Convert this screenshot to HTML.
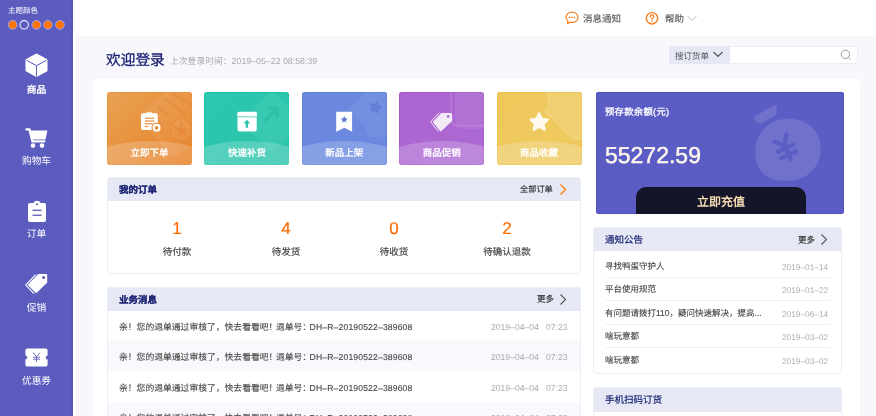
<!DOCTYPE html>
<html lang="zh-CN">
<head>
<meta charset="utf-8">
<style>
*{box-sizing:border-box;margin:0;padding:0}
html,body{width:876px;height:416px;overflow:hidden;background:#fff}
body{position:relative;font-family:"Liberation Sans",sans-serif;color:#333;text-rendering:geometricPrecision}
.a{position:absolute;white-space:nowrap}
#side{left:0;top:0;width:73px;height:416px;background:#5c5cbf;border-right:2px solid #5656b9}
.mi{position:absolute;left:0;width:73px;text-align:center;color:#fff;font-size:9.7px;line-height:12px}
#content{left:75px;top:36px;width:801px;height:380px;background:#f7f7fc}
#panel{left:93px;top:79px;width:767px;height:360px;background:#fff;border-radius:4px}
.tile{position:absolute;top:92px;width:85px;height:73px;border-radius:3px;overflow:hidden}
.tile .band{position:absolute;left:-27.5px;top:48.5px;width:140px;height:56px;border-radius:50%;background:rgba(255,255,255,.2)}
.tile .lbl{position:absolute;left:0;width:100%;top:55.5px;text-align:center;color:#fff;font-size:9.5px;line-height:12px;font-weight:bold}
.tile svg{position:absolute}
.card{position:absolute;border:1px solid #eceef7;border-radius:3px;background:#fff;overflow:hidden}
.card .hd{position:absolute;left:-1px;top:-1px;right:-1px;height:23.5px;background:#e6e9f5;border-radius:3px 3px 0 0}
.navy{color:#1c2574}
.bs{-webkit-text-stroke:.12px currentColor}
.ms{-webkit-text-stroke:.2px currentColor}
.lat{font-size:8.6px;letter-spacing:.15px}
.dt{font-size:8.6px}
.nd{font-size:8.8px}
.nd2{font-size:8.3px}
.pn{letter-spacing:-1.5px}
.gray{color:#999}
</style>
</head>
<body>
<div id="wrap" style="position:absolute;left:0;top:0;width:876px;height:416px;will-change:transform">
<!-- sidebar -->
<div id="side" class="a">
  <div class="a" style="left:8px;top:6px;font-size:7.5px;line-height:10px;color:#fff">主题颜色</div>
  <svg class="a" style="left:0;top:0" width="73" height="36">
    <circle cx="12.7" cy="24.8" r="4.4" fill="#ff7500" stroke="#9aa3ff" stroke-width="1"/>
    <circle cx="24.2" cy="24.8" r="4.2" fill="none" stroke="#f0f0ff" stroke-width="1.1"/>
    <circle cx="36.4" cy="24.8" r="4.4" fill="#ff7500" stroke="#9aa3ff" stroke-width="1"/>
    <circle cx="47.9" cy="24.8" r="4.4" fill="#ff7500" stroke="#9aa3ff" stroke-width="1"/>
    <circle cx="59.9" cy="24.8" r="4.4" fill="#ff7500" stroke="#9aa3ff" stroke-width="1"/>
  </svg>
  <!-- cube -->
  <svg class="a" style="left:24px;top:52px" width="25" height="27" viewBox="0 0 25 27">
    <path d="M12.5 2.8 L22.2 8.2 L22.2 18.4 L12.5 23.6 L2.8 18.4 L2.8 8.2 Z" fill="#fff" stroke="#fff" stroke-width="2.6" stroke-linejoin="round"/>
    <path d="M2.6 8.4 L12.5 13.6 L22.4 8.4 M12.5 13.6 L12.5 24.6" fill="none" stroke="#5c5cbf" stroke-width="1"/>
  </svg>
  <div class="mi" style="top:84.5px;font-weight:bold;font-size:9.8px">商品</div>
  <!-- cart -->
  <svg class="a" style="left:24px;top:126px" width="25" height="24" viewBox="0 0 25 24">
    <path d="M2.4 3.3 L5.4 3.3 L8.4 15.3 L20.4 15.3" fill="none" stroke="#fff" stroke-width="2.3" stroke-linecap="round" stroke-linejoin="round"/>
    <path d="M6.2 4.5 L23.4 4.5 L21.5 13.4 L8.3 13.4 Z" fill="#fff"/>
    <circle cx="9" cy="19.6" r="2.3" fill="#fff"/>
    <circle cx="18" cy="19.6" r="2.3" fill="#fff"/>
  </svg>
  <div class="mi" style="top:156px">购物车</div>
  <!-- clipboard -->
  <svg class="a" style="left:27px;top:200px" width="20" height="24" viewBox="0 0 20 24">
    <path d="M3 3 L6.5 3 Q7 0.8 10 0.8 Q13 0.8 13.5 3 L17 3 Q19 3 19 5 L19 20 Q19 22 17 22 L3 22 Q1 22 1 20 L1 5 Q1 3 3 3 Z" fill="#fff"/>
    <circle cx="10" cy="4.2" r="1" fill="#5c5cbf"/>
    <rect x="5.5" y="9.6" width="9" height="1.3" fill="#5c5cbf"/>
    <rect x="5.5" y="14.6" width="9" height="1.3" fill="#5c5cbf"/>
  </svg>
  <div class="mi" style="top:229px">订单</div>
  <!-- tag -->
  <svg class="a" style="left:24px;top:272px" width="25" height="24" viewBox="0 0 25 24">
    <path d="M14.2 2 L22.4 2 Q23.2 2 23.2 2.8 L23.2 10.4 L12.8 20.8 Q12.2 21.4 11.6 20.8 L4.2 13.4 Q3.6 12.8 4.2 12.2 Z" fill="#fff"/>
    <circle cx="19.6" cy="5.6" r="1.5" fill="#5c5cbf"/>
    <path d="M11.8 2.6 L2 12.6 Q1.6 13 2 13.4 L10 21.6" fill="none" stroke="#fff" stroke-width="1.1" stroke-linejoin="round"/>
  </svg>
  <div class="mi" style="top:303px;font-size:9.8px">促销</div>
  <!-- ticket -->
  <svg class="a" style="left:24px;top:347px" width="25" height="22" viewBox="0 0 25 22">
    <path d="M3.2 1.5 L21.8 1.5 Q23.6 1.5 23.6 3.3 L23.6 8.6 A1.9 1.9 0 0 0 23.6 12.4 L23.6 17.7 Q23.6 19.5 21.8 19.5 L3.2 19.5 Q1.4 19.5 1.4 17.7 L1.4 12.4 A1.9 1.9 0 0 0 1.4 8.6 L1.4 3.3 Q1.4 1.5 3.2 1.5 Z" fill="#fff"/>
    <path d="M9 5.8 L12.5 9.4 L16 5.8 M12.5 9.4 L12.5 14.8 M9 10.2 L16 10.2 M9 12.2 L16 12.2" fill="none" stroke="#5c5cbf" stroke-width=".9"/>
  </svg>
  <div class="mi" style="top:376px">优惠券</div>
</div>

<!-- header -->
<svg class="a" style="left:565px;top:11px" width="14" height="14" viewBox="0 0 14 14">
  <path d="M7 1.2 C3.6 1.2 1.1 3.4 1.1 6.3 C1.1 7.8 1.8 9 2.9 9.9 L2.4 12.6 L5.2 11.2 C5.8 11.3 6.4 11.4 7 11.4 C10.4 11.4 12.9 9.2 12.9 6.3 C12.9 3.4 10.4 1.2 7 1.2 Z" fill="none" stroke="#f97f1f" stroke-width="1.2" stroke-linejoin="round"/>
  <circle cx="4.5" cy="6.3" r=".85" fill="#f97f1f"/><circle cx="7" cy="6.3" r=".85" fill="#f97f1f"/><circle cx="9.5" cy="6.3" r=".85" fill="#f97f1f"/>
</svg>
<div class="a" style="left:583px;top:13.5px;font-size:9.5px;line-height:12px;color:#555;-webkit-text-stroke:.12px #555">消息通知</div>
<svg class="a" style="left:645px;top:11px" width="14" height="14" viewBox="0 0 14 14">
  <circle cx="7" cy="7.3" r="5.7" fill="none" stroke="#f97f1f" stroke-width="1.35"/>
  <path d="M5.3 5.7 Q5.3 3.9 7 3.9 Q8.7 3.9 8.7 5.5 Q8.7 6.4 7.8 6.9 Q7 7.3 7 8.5" fill="none" stroke="#f97f1f" stroke-width="1.35" stroke-linecap="round"/>
  <circle cx="7" cy="10.2" r=".7" fill="#f97f1f"/>
</svg>
<div class="a" style="left:665px;top:13.5px;font-size:9.5px;line-height:12px;color:#555;-webkit-text-stroke:.12px #555">帮助</div>
<svg class="a" style="left:686px;top:14px" width="12" height="8" viewBox="0 0 12 8">
  <path d="M1.5 2 L6 6.5 L10.5 2" fill="none" stroke="#bdbdbd" stroke-width="1"/>
</svg>

<!-- content -->
<div id="content" class="a"></div>
<div class="a navy" style="left:106px;top:51px;font-size:14.7px;line-height:20px;color:#1b2272;-webkit-text-stroke:.3px #1b2272">欢迎登录</div>
<div class="a" style="left:170px;top:56px;font-size:8.8px;line-height:11px;color:#aaa">上次登录时间：<span class="nd">2019–05–22 08:58:39</span></div>

<!-- search -->
<div class="a" style="left:669px;top:46px;width:189px;height:18px;background:#fff;border:1px solid #eceef6;border-radius:2px"></div>
<div class="a" style="left:669px;top:46px;width:61px;height:18px;background:#e6e9f5;border-radius:2px 0 0 2px"></div>
<div class="a" style="left:675px;top:51px;font-size:8.5px;line-height:11px;color:#555">搜订货单</div>
<svg class="a" style="left:712px;top:50px" width="12" height="9" viewBox="0 0 12 9">
  <path d="M1.5 2 L6 6.5 L10.5 2" fill="none" stroke="#555" stroke-width="1.2"/>
</svg>
<svg class="a" style="left:840px;top:49px" width="12" height="12" viewBox="0 0 12 12">
  <circle cx="5.4" cy="5.4" r="4.2" fill="none" stroke="#999" stroke-width="1"/>
  <path d="M8.4 8.4 L10.6 10.6" stroke="#999" stroke-width="1"/>
</svg>

<div id="panel" class="a"></div>

<!-- tiles -->
<div class="tile" style="left:107px;background:linear-gradient(135deg,#e8a253 0%,#e8913d 50%,#e77b1c 100%);box-shadow:inset 0 0 0 1px rgba(225,125,35,.3)">
  <svg style="left:0;top:0" width="85" height="73" viewBox="0 0 85 73">
    <g transform="rotate(-40 62 25)"><rect x="38" y="4" width="56" height="56" rx="7" fill="rgba(255,255,255,.07)"/></g>
    <path d="M52.5 16 L60.6 23 M58.3 6.9 L79 23 M65 1.2 L84 12.7" stroke="rgba(225,110,15,.2)" stroke-width="2.9" stroke-linecap="round"/>
    <circle cx="74.4" cy="38" r="11" fill="rgba(255,255,255,.06)" stroke="rgba(225,110,15,.12)" stroke-width="1.5"/>
    <path d="M70 32 L74.4 37 L78.8 32 M74.4 37 L74.4 45 M69.5 38.5 L79.3 38.5 M69.5 41.5 L79.3 41.5" transform="rotate(-35 74.4 38)" stroke="rgba(225,110,15,.3)" stroke-width="1.6" fill="none"/>
    <path d="M36 21.2 L39.4 21.2 Q39.6 20.2 40.6 20.2 L44.2 20.2 Q45.2 20.2 45.4 21.2 L48.7 21.2 Q50.8 21.2 50.8 23.3 L50.8 31 L45 36 L45 38 L36 38 Q34 38 34 36 L34 23.2 Q34 21.2 36 21.2 Z" fill="#fff"/>
    <rect x="37.8" y="25.6" width="9.4" height="1.2" fill="#e8913d"/>
    <rect x="37.8" y="28.4" width="9.4" height="1.2" fill="#e8913d"/>
    <rect x="37.8" y="31.1" width="8" height="1.2" fill="#e8913d"/>
    <rect x="37.8" y="33.9" width="3.6" height="1.2" fill="#e8913d"/>
    <circle cx="49.6" cy="35.8" r="5.2" fill="#e8913d"/>
    <circle cx="49.6" cy="35.8" r="4" fill="#fff"/>
    <circle cx="49.6" cy="35.8" r="1.9" fill="#e8913d"/>
  </svg>
  <div class="band"></div>
  <div class="lbl">立即下单</div>
</div>
<div class="tile" style="left:204.4px;background:linear-gradient(135deg,#2dc7b0,#2ac4aa);box-shadow:inset 0 0 0 1px rgba(25,190,160,.5)">
  <svg style="left:0;top:0" width="85" height="73" viewBox="0 0 85 73">
    <g transform="rotate(45 68 30)"><rect x="46" y="8" width="44" height="44" rx="4" fill="rgba(255,255,255,.07)"/></g>
    <path d="M59.4 30 L72.5 16.9 M64 16.1 L73.3 16.1 L73.3 25.4" stroke="rgba(20,165,140,.25)" stroke-width="3.3" fill="none" stroke-linejoin="miter"/>
    <path d="M35.2 19.8 L51 19.8 Q53 19.8 53 21.8 L53 24.4 L33.2 24.4 L33.2 21.8 Q33.2 19.8 35.2 19.8 Z" fill="#fff"/>
    <path d="M33.5 25.2 L52.7 25.2 L52.7 37.4 Q52.7 39.4 50.7 39.4 L35.5 39.4 Q33.5 39.4 33.5 37.4 Z" fill="#fff"/>
    <path d="M42.85 27.7 L46.2 31.6 L44 31.6 L44 35.8 L41.7 35.8 L41.7 31.6 L39.5 31.6 Z" fill="#2bc3a8"/>
  </svg>
  <div class="band"></div>
  <div class="lbl">快速补货</div>
</div>
<div class="tile" style="left:301.8px;background:linear-gradient(135deg,#6b88de,#6a89e0);box-shadow:inset 0 0 0 1px rgba(80,115,215,.5)">
  <svg style="left:0;top:0" width="85" height="73" viewBox="0 0 85 73">
    <path d="M46 18 L66 -2 L92 -2 L92 44 L67 46 Q63 32 56 27 Z" fill="rgba(255,255,255,.06)"/>
    <path d="M73.9 9.2 L75.7 12.9 L79.8 13.4 L76.8 16.2 L77.5 20.3 L73.9 18.3 L70.3 20.3 L71 16.2 L68 13.4 L72.1 12.9 Z" transform="rotate(15 73.9 15)" fill="rgba(85,110,205,.4)" stroke="rgba(85,110,205,.4)" stroke-width="1.2" stroke-linejoin="round"/>
    <g transform="translate(-1 0)"><path d="M36.2 19.8 L50.1 19.8 Q51.1 19.8 51.1 20.8 L51.1 39.8 L43.35 35.8 L35.2 39.8 L35.2 20.8 Q35.2 19.8 36.2 19.8 Z" fill="#fff"/>
    <path d="M43.3 24.6 L44.2 26.5 L46.2 26.7 L44.7 28.1 L45.1 30.1 L43.3 29.1 L41.5 30.1 L41.9 28.1 L40.4 26.7 L42.4 26.5 Z" fill="#5a74d0" stroke="#5a74d0" stroke-width=".5" stroke-linejoin="round"/></g>
  </svg>
  <div class="band"></div>
  <div class="lbl">新品上架</div>
</div>
<div class="tile" style="left:399.2px;background:linear-gradient(135deg,#ab64d1,#ad6ad3);box-shadow:inset 0 0 0 1px rgba(155,70,195,.45)">
  <svg style="left:0;top:0" width="85" height="73" viewBox="0 0 85 73">
    <path d="M56 -2 L56 30 Q56 37 63 37 L90 37 L90 -2 Z" fill="rgba(255,255,255,.07)"/>
    <path d="M52.2 -2 L52.2 27.5 Q52.2 33.6 58.3 33.6 L90 33.6" stroke="rgba(255,255,255,.14)" stroke-width="1.4" fill="none"/>
    <g transform="translate(-1 0)"><path d="M43.5 21.6 L52.4 21.6 Q53.4 21.6 53.4 22.6 L53.7 28.6 L42.7 38.8 L35.6 30 Z" fill="#f3eaf8" stroke="#f3eaf8" stroke-width="1.2" stroke-linejoin="round"/>
    <circle cx="50.2" cy="24.4" r="1.3" fill="#a862ce"/>
    <path d="M41.2 20.8 L32.7 29.9 L40.4 39.4" fill="none" stroke="#f3eaf8" stroke-width="1" stroke-linejoin="round"/></g>
  </svg>
  <div class="band"></div>
  <div class="lbl">商品促销</div>
</div>
<div class="tile" style="left:496.6px;background:linear-gradient(135deg,#eec85b,#efca60);box-shadow:inset 0 0 0 1px rgba(235,185,50,.5)">
  <svg style="left:0;top:0" width="85" height="73" viewBox="0 0 85 73">
    <path d="M49 -2 L52.7 11.5 L47.5 19.5 L63 33.5 L76 47 L90 47 L90 -2 Z" fill="rgba(255,255,255,.12)" stroke="rgba(255,255,255,.12)" stroke-width="2" stroke-linejoin="round"/>
    <path d="M43.2 14.1 L45.9 19.6 L51.9 20.4 L47.5 24.6 L48.6 30.6 L43.2 27.7 L37.8 30.6 L38.9 24.6 L34.5 20.4 L40.5 19.6 Z" transform="translate(-1 7.2)" fill="#fff9ee" stroke="#fff9ee" stroke-width="2.2" stroke-linejoin="round"/>
  </svg>
  <div class="band"></div>
  <div class="lbl">商品收藏</div>
</div>

<!-- balance card -->
<div class="a" style="left:596px;top:92px;width:248px;height:122px;background:#5b5cc4;border-radius:3px;overflow:hidden;box-shadow:inset 0 0 0 1px #5052c0">
  <svg class="a" style="left:0;top:0" width="248" height="122" viewBox="596 92 248 122">
    <g fill="rgba(255,255,255,0.13)">
      <path d="M753.5 117.5 L772.5 105.8 Q777.2 103.6 777 108.2 L776.3 113.6 Q775.8 115.6 773.8 116.6 L762.6 123.2 Q756.5 125.2 753.5 117.5 Z"/>
      <path d="M787.0 118.8 C793.7 118.6 802.6 120.5 808.0 124.0 C813.4 127.5 817.7 134.0 819.5 140.0 C821.3 146.0 821.2 154.0 819.0 160.0 C816.8 166.0 811.5 172.5 806.0 176.0 C800.5 179.5 792.7 180.8 786.0 180.8 C779.3 180.8 771.0 179.5 766.0 176.0 C761.0 172.5 757.5 166.0 756.0 160.0 C754.5 154.0 755.0 145.8 757.0 140.0 C759.0 134.2 763.0 128.5 768.0 125.0 C773.0 121.5 780.3 119.0 787.0 118.8 Z"/>
    </g>
    <g transform="translate(784.3 145.3) rotate(-25)" stroke="#5b5cc4" stroke-width="4.3" stroke-linecap="round" fill="none">
      <path d="M-7.5 -7 L0 0 L6.5 -9 M0 0 L0 15.5 M-8.5 3.2 L8.5 3.2 M-8.5 10.5 L8.5 10.5"/>
    </g>
  </svg>
  <div class="a" style="left:9px;top:14px;font-size:9.3px;line-height:12px;color:#fff;-webkit-text-stroke:.3px #fff;letter-spacing:.3px">预存款余额(元)</div>
  <div class="a" style="left:9px;top:49.5px;font-size:23px;line-height:26px;color:#fff9ec;-webkit-text-stroke:.45px #fff9ec">55272.59</div>
  <div class="a" style="left:40px;top:94.5px;width:170px;height:40px;background:#15152a;border-radius:10px"></div>
  <div class="a" style="left:40px;top:101.5px;width:170px;text-align:center;font-size:12px;line-height:16px;font-weight:bold;color:#f3dcb2">立即充值</div>
</div>

<!-- orders card -->
<div class="card" style="left:107px;top:177px;width:474px;height:97px">
  <div class="hd"></div>
</div>
<div class="a navy bs" style="left:119px;top:185px;font-size:9.5px;line-height:12px;font-weight:bold">我的订单</div>
<div class="a" style="left:520px;top:184px;font-size:8.2px;line-height:11px;color:#333;-webkit-text-stroke:.15px #333">全部订单</div>
<svg class="a" style="left:558px;top:183px" width="10" height="13" viewBox="0 0 10 13">
  <path d="M2.5 1.5 L7.5 6.5 L2.5 11.5" fill="none" stroke="#ff7a00" stroke-width="1.3"/>
</svg>
<div class="a" style="left:147px;top:217.5px;width:60px;text-align:center;font-size:17px;line-height:22px;color:#ff6a00;-webkit-text-stroke:.2px #ff6a00">1</div>
<div class="a" style="left:147px;top:247px;width:60px;text-align:center;font-size:9.5px;line-height:12px;color:#444;-webkit-text-stroke:.15px #444">待付款</div>
<div class="a" style="left:256px;top:217.5px;width:60px;text-align:center;font-size:17px;line-height:22px;color:#ff6a00;-webkit-text-stroke:.2px #ff6a00">4</div>
<div class="a" style="left:256px;top:247px;width:60px;text-align:center;font-size:9.5px;line-height:12px;color:#444;-webkit-text-stroke:.15px #444">待发货</div>
<div class="a" style="left:364px;top:217.5px;width:60px;text-align:center;font-size:17px;line-height:22px;color:#ff6a00;-webkit-text-stroke:.2px #ff6a00">0</div>
<div class="a" style="left:364px;top:247px;width:60px;text-align:center;font-size:9.5px;line-height:12px;color:#444;-webkit-text-stroke:.15px #444">待收货</div>
<div class="a" style="left:477px;top:217.5px;width:60px;text-align:center;font-size:17px;line-height:22px;color:#ff6a00;-webkit-text-stroke:.2px #ff6a00">2</div>
<div class="a" style="left:477px;top:247px;width:60px;text-align:center;font-size:9.5px;line-height:12px;color:#444;-webkit-text-stroke:.15px #444">待确认退款</div>

<!-- business card -->
<div class="card" style="left:107px;top:287px;width:474px;height:140px">
  <div class="hd"></div>
  <div class="a" style="left:0;top:52px;width:474px;height:30.5px;background:#f8f9fd"></div>
  <div class="a" style="left:0;top:113.5px;width:474px;height:30.5px;background:#f8f9fd"></div>
</div>
<div class="a navy bs" style="left:119px;top:295px;font-size:9.5px;line-height:12px;font-weight:bold">业务消息</div>
<div class="a" style="left:537px;top:294px;font-size:8.5px;line-height:11px;color:#333;-webkit-text-stroke:.15px #333">更多</div>
<svg class="a" style="left:558px;top:293px" width="10" height="13" viewBox="0 0 10 13">
  <path d="M2.5 1.5 L7.5 6.5 L2.5 11.5" fill="none" stroke="#555" stroke-width="1.1"/>
</svg>
<div class="a" style="left:119px;top:322px;font-size:8.8px;line-height:11px;color:#484848;-webkit-text-stroke:.12px #484848">亲！您的退单通过审核了，快去看看吧<span class="pn">！</span>退单号<span class="pn">：</span><span class="lat">DH–R–20190522–389608</span></div>
<div class="a" style="left:491px;top:322px;font-size:8.5px;line-height:11px;color:#aaa"><span class="dt">2019–04–04&nbsp;&nbsp;&nbsp;07:23</span></div>
<div class="a" style="left:119px;top:352px;font-size:8.8px;line-height:11px;color:#484848;-webkit-text-stroke:.12px #484848">亲！您的退单通过审核了，快去看看吧<span class="pn">！</span>退单号<span class="pn">：</span><span class="lat">DH–R–20190522–389608</span></div>
<div class="a" style="left:491px;top:352px;font-size:8.5px;line-height:11px;color:#aaa"><span class="dt">2019–04–04&nbsp;&nbsp;&nbsp;07:23</span></div>
<div class="a" style="left:119px;top:383px;font-size:8.8px;line-height:11px;color:#484848;-webkit-text-stroke:.12px #484848">亲！您的退单通过审核了，快去看看吧<span class="pn">！</span>退单号<span class="pn">：</span><span class="lat">DH–R–20190522–389608</span></div>
<div class="a" style="left:491px;top:383px;font-size:8.5px;line-height:11px;color:#aaa"><span class="dt">2019–04–04&nbsp;&nbsp;&nbsp;07:23</span></div>
<div class="a" style="left:119px;top:413px;font-size:8.8px;line-height:11px;color:#484848;-webkit-text-stroke:.12px #484848">亲！您的退单通过审核了，快去看看吧<span class="pn">！</span>退单号<span class="pn">：</span><span class="lat">DH–R–20190522–389608</span></div>
<div class="a" style="left:491px;top:413px;font-size:8.5px;line-height:11px;color:#aaa"><span class="dt">2019–04–04&nbsp;&nbsp;&nbsp;07:23</span></div>

<!-- notice card -->
<div class="card" style="left:593px;top:227px;width:249px;height:147px">
  <div class="hd" style="height:24px"></div>
</div>
<div class="a navy ms" style="left:605px;top:234.5px;font-size:9.5px;line-height:12px">通知公告</div>
<div class="a" style="left:798px;top:234.5px;font-size:8.5px;line-height:11px;color:#333;-webkit-text-stroke:.15px #333">更多</div>
<svg class="a" style="left:819px;top:233px" width="10" height="13" viewBox="0 0 10 13">
  <path d="M2.5 1.5 L7.5 6.5 L2.5 11.5" fill="none" stroke="#555" stroke-width="1.1"/>
</svg>
<div class="a" style="left:605px;top:260.5px;font-size:8.5px;line-height:11px;color:#444;-webkit-text-stroke:.1px #444">寻找鸭蛋守护人</div>
<div class="a" style="left:782px;top:261.5px;font-size:8.5px;line-height:11px;color:#aaa"><span class="nd2">2019–01–14</span></div>
<div class="a" style="left:605px;top:276.5px;width:225px;height:1px;background:#f0f1f5"></div>
<div class="a" style="left:605px;top:284.1px;font-size:8.5px;line-height:11px;color:#444;-webkit-text-stroke:.1px #444">平台使用规范</div>
<div class="a" style="left:782px;top:285.1px;font-size:8.5px;line-height:11px;color:#aaa"><span class="nd2">2019–01–22</span></div>
<div class="a" style="left:605px;top:300.1px;width:225px;height:1px;background:#f0f1f5"></div>
<div class="a" style="left:605px;top:307.7px;font-size:8.5px;line-height:11px;color:#444;-webkit-text-stroke:.1px #444">有问题请拨打110，疑问快速解决，提高...</div>
<div class="a" style="left:782px;top:308.7px;font-size:8.5px;line-height:11px;color:#aaa"><span class="nd2">2019–06–14</span></div>
<div class="a" style="left:605px;top:323.7px;width:225px;height:1px;background:#f0f1f5"></div>
<div class="a" style="left:605px;top:331.3px;font-size:8.5px;line-height:11px;color:#444;-webkit-text-stroke:.1px #444">啥玩意都</div>
<div class="a" style="left:782px;top:332.3px;font-size:8.5px;line-height:11px;color:#aaa"><span class="nd2">2019–03–02</span></div>
<div class="a" style="left:605px;top:347.3px;width:225px;height:1px;background:#f0f1f5"></div>
<div class="a" style="left:605px;top:354.9px;font-size:8.5px;line-height:11px;color:#444;-webkit-text-stroke:.1px #444">啥玩意都</div>
<div class="a" style="left:782px;top:355.9px;font-size:8.5px;line-height:11px;color:#aaa"><span class="nd2">2019–03–02</span></div>

<!-- qr card -->
<div class="card" style="left:593px;top:387px;width:249px;height:40px">
  <div class="hd" style="height:25px"></div>
</div>
<div class="a navy ms" style="left:605px;top:395px;font-size:9.5px;line-height:12px">手机扫码订货</div>

</div>
</body>
</html>
